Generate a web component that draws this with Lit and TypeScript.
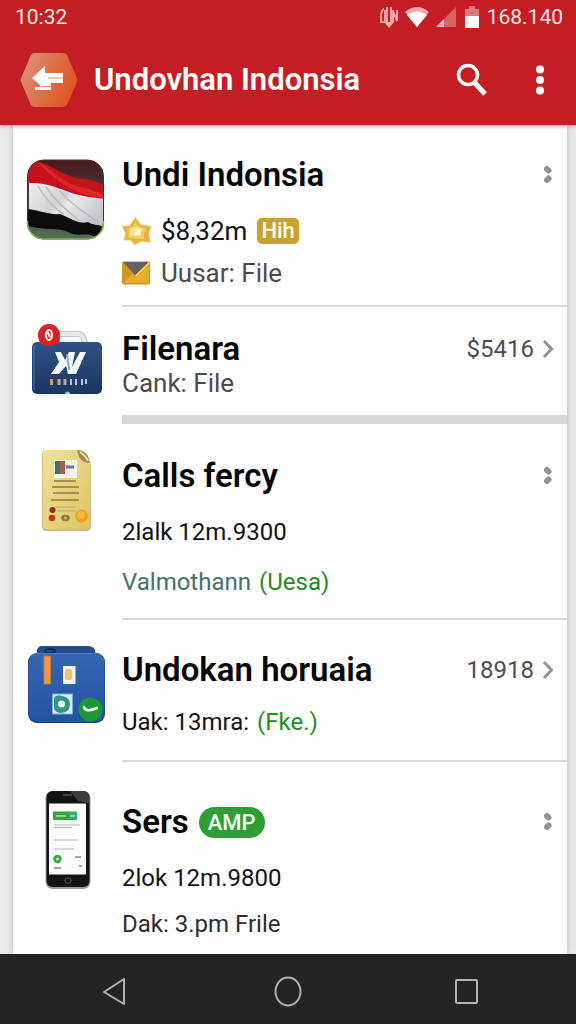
import { LitElement, html, css, svg, nothing } from "lit";
import { customElement, property } from "lit/decorators.js";

const flagIcon = html`<svg class="icon" width="80" height="82" viewBox="0 0 80 82" aria-hidden="true">
  <defs>
    <clipPath id="flagClip"><rect x="1.500" y="1" width="76" height="79" rx="16" /></clipPath>
    <linearGradient id="cloth" x1="0" y1="0" x2="1" y2="0.600">
      <stop offset="0" stop-color="#f2f2f3" /><stop offset=".45" stop-color="#d0d1d4" />
      <stop offset=".6" stop-color="#e8e9eb" /><stop offset="1" stop-color="#c3c5c9" />
    </linearGradient>
    <linearGradient id="ground" x1="0" y1="0" x2="0" y2="1">
      <stop offset="0" stop-color="#4b171b" /><stop offset=".7" stop-color="#47504b" /><stop offset="1" stop-color="#5b7259" />
    </linearGradient>
  </defs>
  <g clip-path="url(#flagClip)">
    <rect width="80" height="82" fill="url(#ground)" />
    <path d="M2 2 H12 C28 8 44 20 58 20 C66 20 72 24 80 26 V42 C64 40 58 38 46 34 C32 28 18 24 2 24Z" fill="#c4141b" />
    <path d="M12 3 C28 12 40 26 54 28 C64 29 70 34 80 35 V39 C60 38 36 30 12 3Z" fill="#de2626" />
    <path d="M3 24 C20 23 32 29 46 34 C58 38 66 38 80 40 V69 C68 63 60 66 48 62 C32 56 20 54 3 51Z" fill="url(#cloth)" />
    <path d="M20 28 C28 40 38 50 54 62 M12 27 C18 38 26 47 38 56 M34 32 C44 44 58 54 74 64" stroke="#b9bbbf" stroke-width="1.500" fill="none" />
    <path d="M2 50 C16 52 24 56 34 55 C46 60 54 66 62 63 C70 68 74 65 80 69 V75 L70 79 C62 72 52 79 42 73 C32 68 20 72 2 67Z" fill="#0c0c0e" />
  </g>
  <rect x="1.500" y="1" width="76" height="79" rx="16" fill="none" stroke="#3a3436" stroke-width="1" />
  <path d="M1.500 62 V64 A16 16 0 0 0 17.500 80 H61.500 A16 16 0 0 0 77.500 64 V62" fill="none" stroke="#79bd45" stroke-width="1.500" />
</svg>`;

const caseIcon = html`<svg class="icon" width="80" height="74" viewBox="0 0 80 74" aria-hidden="true">
  <defs><linearGradient id="caseBody" x1="0" y1="0" x2="0" y2="1">
    <stop offset="0" stop-color="#2f5387" /><stop offset="1" stop-color="#1c3562" /></linearGradient></defs>
  <path d="M31 21 V14 Q31 11 36 11 H52 Q58 11 59 21" fill="none" stroke="#c4c6c7" stroke-width="6" />
  <path d="M31 21 V14 Q31 11 36 11 H52 Q58 11 59 21" fill="none" stroke="#e9eaea" stroke-width="4" />
  <rect x="6" y="19" width="70" height="52" rx="5" fill="url(#caseBody)" />
  <path d="M8 22 V67" stroke="#5474a0" stroke-width="1" />
  <path d="M29 29 H35 L39 37 L43 29 H49 L46 44 L54 29 H60 L50 51 H42 L40 43 L33 51 H25 L33 39Z" fill="#f6f9fc" />
  <path d="M41 31 L43 47" stroke="#8da6c8" stroke-width="2" />
  <g stroke-width="3" fill="none"><path d="M25.500 56 v6" stroke="#d7a35e" /><path d="M33 56 v6 M39 56 v6" stroke="#b9a998" /><path d="M45 56 v6 M50 56 v6 M56 56 v6 M60 56 v5" stroke="#b9c7d9" stroke-width="2" /></g>
  <path d="M39 71 a2.500 2.500 0 0 1 5 0Z" fill="#b6c6dd" />
  <path d="M12.500 14 a10.500 11 0 0 1 21 -3 V21 H14Z" fill="#dc2227" />
  <circle cx="23" cy="12" r="11" fill="#dc2227" />
  <ellipse cx="23" cy="12" rx="3" ry="5" fill="none" stroke="#fff" stroke-width="2" /><path d="M21 8 L24 14" stroke="#fff" stroke-width="2" />
</svg>`;

const noteIcon = html`<svg class="icon" width="80" height="84" viewBox="0 0 80 84" aria-hidden="true">
  <defs><linearGradient id="paper" x1="0" y1="0" x2="1" y2="1">
    <stop offset="0" stop-color="#f1e29a" /><stop offset="1" stop-color="#dec363" /></linearGradient></defs>
  <path d="M20 2 H52 L65 15 V77 Q65 82 60 82 H21 Q16 82 16 77 V6 Q16 2 20 2Z" fill="#cbbd8a" />
  <path d="M20 1 H52 L64 14 V76 Q64 80 60 80 H21 Q17 80 17 76 V5 Q17 1 20 1Z" fill="url(#paper)" />
  <path d="M51 1 Q62 1 64 14 Q53 14 51 1Z" fill="#a08b4c" /><path d="M54 3 Q60 7 62 12" stroke="#efe09d" stroke-width="2" fill="none" />
  <rect x="28" y="11" width="23" height="18" fill="#f4f4ee" />
  <rect x="29" y="12" width="10" height="13" fill="#38775a" /><path d="M34 12 H39 V25 H34Z" fill="#ad5a4f" />
  <path d="M40 18 H48" stroke="#5876b4" stroke-width="3" /><path d="M39 17 H45" stroke="#c78585" stroke-width="1" />
  <path d="M28 32 H50 M26 38 H53 M27 44 H53 M25 51 H53" stroke="#8b7b42" stroke-width="1.300" />
  <path d="M30 58 H50 M31 62 H50" stroke="#c0ac62" stroke-width="1.200" />
  <circle cx="26.500" cy="61" r="3" fill="#8d2c22" /><circle cx="26" cy="69" r="3.300" fill="#bd3b22" />
  <ellipse cx="39.500" cy="69" rx="4.300" ry="3.200" fill="#927a40" /><circle cx="39.500" cy="69" r="1.500" fill="#c9b573" />
  <circle cx="55.500" cy="67" r="6.500" fill="#eda31e" /><circle cx="55" cy="66" r="4" fill="#f9b838" />
</svg>`;

const folderIcon = html`<svg class="icon" width="80" height="80" viewBox="0 0 80 80" aria-hidden="true">
  <defs><linearGradient id="folder" x1="0" y1="0" x2="0" y2="1">
    <stop offset="0" stop-color="#3567b3" /><stop offset="1" stop-color="#2453a0" /></linearGradient></defs>
  <path d="M10 14 L11 5 Q12 1 16 1 H62 Q67 1 69 5 L70 14Z" fill="#244c8f" />
  <ellipse cx="24" cy="6" rx="5" ry="2" fill="none" stroke="#122c5b" stroke-width="2" />
  <rect x="2" y="8" width="77" height="70" rx="9" fill="#183d7f" />
  <rect x="2.500" y="8" width="76" height="69" rx="9" fill="url(#folder)" />
  <path d="M10 8.500 H70" stroke="#5580c0" stroke-width="1" />
  <rect x="18" y="11" width="6.500" height="28" fill="#f0984a" stroke="#ca7933" />
  <rect x="37" y="21" width="12.500" height="18" fill="#f6f3ee" /><rect x="39" y="24" width="7" height="11" rx="2" fill="#f6bf6e" />
  <rect x="26.500" y="49" width="20" height="20" fill="#dceaf1" stroke="#7fa8dc" />
  <path d="M28 54 Q28 50 34 50.500 Q45 52 44 60 Q43 68 34 68 Q28 67 28 62Z" fill="#2a9a82" /><circle cx="35.500" cy="59" r="3.500" fill="#eef8f5" />
  <circle cx="64.500" cy="64.500" r="12" fill="#199a35" />
  <path d="M58 62 Q60 68 71 63" stroke="#fff" stroke-width="2.500" fill="none" stroke-linecap="round" />
</svg>`;

const phoneIcon = html`<svg class="icon" width="80" height="100" viewBox="0 0 80 100" aria-hidden="true">
  <rect x="19.500" y="1" width="45" height="98" rx="7" fill="#9c9da0" />
  <rect x="20.500" y="1" width="43" height="96" rx="6" fill="#141416" />
  <path d="M44 1 H57 Q63 1 63 8 V13 L52 11Z" fill="#3d3e41" />
  <path d="M37 5 H46" stroke="#606266" stroke-width="1.200" />
  <rect x="23" y="13.500" width="37" height="71" fill="#fbfcfc" />
  <rect x="27" y="21.500" width="24" height="8.500" fill="#34a63b" /><rect x="43" y="22" width="8" height="7" fill="#2fae76" />
  <path d="M30 26 H40 M44 26 H49" stroke="#b3e0b4" stroke-width="1.500" />
  <path d="M28 35 H54 M28 37.500 H46 M28 50 H51 M28 59 H48" stroke="#b4b6b8" stroke-width="1.200" />
  <circle cx="31.500" cy="69" r="4.200" fill="#35ab46" /><circle cx="31.500" cy="69" r="1.600" fill="#b2e1b9" />
  <path d="M49 67 H55 M28 78 H35 M53 76 H56" stroke="#828487" stroke-width="1.300" />
  <rect x="39" y="88" width="6" height="5" rx="2" fill="none" stroke="#53555a" />
</svg>`;

const starIcon = html`<svg width="30" height="30" viewBox="0 0 30 30" aria-hidden="true">
  <path d="M13.500 1.500 L18.500 9 L29 10.500 L26.500 17 L28 26 L19.500 25 L12.500 28.500 L8.500 24 L2.500 24 L3.500 17 L0.500 10.500 L8 10Z" fill="#e9b23c" stroke="#efc35c" stroke-width="1" stroke-linejoin="round" />
  <path d="M13.500 5 L17.500 11 L25 12 L22 18 L22 23 L13 23 L6 21 L7 16 L4 12 L10 12Z" fill="#f4cc5f" />
  <path d="M8 12 Q14 9 20 13 L18 20 L8 19Z" fill="#fbe393" /><path d="M14 14 L19 13 L18 19 L13 20Z" fill="#fffbe5" />
</svg>`;

const mailIcon = html`<svg width="30" height="26" viewBox="0 0 30 26" aria-hidden="true">
  <rect x="0" y="1.500" width="28" height="23" rx="2" fill="#d0941f" />
  <path d="M2 23 L10 14 L13 17 L27 4 V23Z" fill="#e9ae2c" />
  <path d="M1 2 H27 L13.500 15.500Z" fill="#66655c" /><path d="M13.500 16 L27 3" stroke="#f8dc87" stroke-width="1.500" />
</svg>`;

const moreMark = svg`<path d="M5 5 L6.500 6.500 M6.500 14.500 L5 16" stroke="#929292" stroke-width="6" stroke-linecap="round" />`;

interface Line { text: string; accent?: string; tone: string; space: string; icon?: unknown; badge?: string }
interface Entry { kind: string; icon: unknown; title: string; pill?: string; count?: string; lines: Line[] }

const entries: Entry[] = [
  { kind: "first", icon: flagIcon, title: "Undi Indonsia", lines: [
    { text: "$8,32m", tone: "dark", space: "far", icon: starIcon, badge: "Hih" },
    { text: "Uusar: File", tone: "grey", space: "near", icon: mailIcon } ] },
  { kind: "short", icon: caseIcon, title: "Filenara", count: "$5416", lines: [
    { text: "Cank: File", tone: "grey", space: "none" } ] },
  { kind: "tall", icon: noteIcon, title: "Calls fercy", lines: [
    { text: "2lalk 12m.9300", tone: "dark", space: "far" },
    { text: "Valmothann", accent: "(Uesa)", tone: "teal", space: "mid" } ] },
  { kind: "medium", icon: folderIcon, title: "Undokan horuaia", count: "18918", lines: [
    { text: "Uak: 13mra:", accent: "(Fke.)", tone: "dark", space: "mid" } ] },
  { kind: "last", icon: phoneIcon, title: "Sers", pill: "AMP", lines: [
    { text: "2lok 12m.9800", tone: "dark", space: "far" },
    { text: "Dak: 3.pm Frile", tone: "soft", space: "low" } ] },
];

@customElement("list-entry")
class ListEntry extends LitElement {
  @property({ attribute: false }) entry!: Entry;

  static styles = css`
    :host { display: block; }
    .row { display: grid; grid-template-columns: 96px minmax(0, 1fr); padding-left: 13px; }
    .icon { display: block; }
    .body { display: grid; grid-template-columns: minmax(0, 1fr) auto; border-bottom: 2px solid #d6d7d8; white-space: nowrap; }
    .first .body { padding: 32px 0 16px; }
    .short .body { padding: 24px 0 16px; border-bottom-width: 9px; }
    .tall .body { padding: 34px 0 20px; }
    .medium .body { padding: 32px 0 22px; }
    .last .body { padding: 42px 0 14px; border-bottom: 0; }
    .first .pic { padding-top: 34px; }
    .short .pic { padding-top: 16px; }
    .tall .pic, .medium .pic { padding-top: 25px; }
    .last .pic { padding-top: 28px; }
    .heading { display: flex; align-items: center; gap: 10px; }
    h2 { margin: 0; font-size: 33px; line-height: 36px; font-weight: 600; color: #060606; }
    .pill { height: 31px; padding: 0 9px; border-radius: 16px; background: #2f9e35; color: #f4fff2; font-size: 22px; line-height: 31px; font-weight: 500; }
    .line { display: flex; align-items: center; height: 32px; font-size: 24px; line-height: 32px; grid-column: 1 / -1; }
    .first .line, .short .line { font-size: 26px; }
    .line svg { flex: none; margin-right: 9px; }
    .far { margin-top: 22px; }
    .mid { margin-top: 18px; }
    .low { margin-top: 14px; }
    .near { margin-top: 10px; }
    .none { margin-top: 0; }
    .dark { color: #131313; }
    .soft { color: #2d2d2d; }
    .grey { color: #4c4c4c; }
    .teal { color: #43716b; }
    .accent { color: #258d20; margin-left: 8px; }
    .badge { margin-left: 10px; padding: 0 4px; height: 26px; border-radius: 5px; background: #c9a22c; color: #fffbe8; font-size: 22px; line-height: 26px; font-weight: 500; }
    .more, .open { display: flex; align-items: center; gap: 8px; height: 36px; border: 0; padding: 0 13px 0 0; background: none; font: inherit; font-size: 24px; line-height: 36px; color: #4e4e4e; }
  `;

  render() {
    const e = this.entry;
    return html`<article class="row ${e.kind}">
      <div class="pic">${e.icon}</div>
      <div class="body">
        <div class="heading"><h2>${e.title}</h2>${e.pill ? html`<span class="pill">${e.pill}</span>` : nothing}</div>
        ${e.count
          ? html`<button class="open" aria-label="${e.title} ${e.count}">${e.count}
              <svg width="12" height="20" viewBox="0 0 12 20"><path d="M2 2 L9.500 10 L2 18" fill="none" stroke="#929292" stroke-width="3" /></svg></button>`
          : html`<button class="more" aria-label="Options for ${e.title}"><svg width="12" height="22" viewBox="0 0 12 22">${moreMark}</svg></button>`}
        ${e.lines.map((l) => html`<div class="line ${l.tone} ${l.space}">${l.icon ?? nothing}<span>${l.text}</span>${l.accent ? html`<span class="accent">${l.accent}</span>` : nothing}${l.badge ? html`<span class="badge">${l.badge}</span>` : nothing}</div>`)}
      </div>
    </article>`;
  }
}

@customElement("app-root")
class AppRoot extends LitElement {
  static styles = css`
    :host { display: flex; flex-direction: column; min-height: 100vh; font-family: Roboto, "Liberation Sans", sans-serif; background: #e9eaea; }
    button { border: 0; padding: 0; background: none; font: inherit; color: inherit; display: block; }
    svg { display: block; }
    .top { background: #c41e24; color: #fff; box-shadow: 0 1px 4px #77777799; z-index: 1; }
    .status { display: flex; align-items: center; gap: 5px; height: 34px; padding: 0 13px 0 15px; font-size: 21px; line-height: 34px; color: #fde9e8; }
    .time { flex: 1; }
    .bar { display: flex; align-items: center; height: 91px; padding: 0 29px 0 20px; }
    h1 { flex: 1; margin: 0 0 0 16px; font-size: 31px; line-height: 40px; font-weight: 600; white-space: nowrap; }
    .find { margin-right: 45px; }
    main { flex: 1; margin: 0 9px 0 13px; background: #fefefe; box-shadow: 0 0 6px #8888; }
    .keys { display: flex; justify-content: space-around; align-items: center; height: 71px; padding: 0 24px; background: #222425; z-index: 1; }
    .keys button { height: 32px; margin-top: 4px; }
  `;

  render() {
    return html`
      <header class="top">
        <div class="status">
          <span class="time">10:32</span>
          <svg width="20" height="24" viewBox="0 0 20 24" aria-hidden="true">
            <g fill="none" stroke="#f0a3a2" stroke-width="2"><path d="M5 4 Q2 5 2 12 V17 H6 V5 M8 2 V20 M12 2 V20 M14 5 V17 M14 6 L18 16 V5" /></g>
            <path d="M5 17 H15 L10 23Z" fill="#f3b2b0" />
          </svg>
          <svg width="26" height="22" viewBox="0 0 26 22" aria-hidden="true">
            <path d="M1 6 Q13 -4 25 6 L13 21Z" fill="#f0aaa9" /><path d="M3 9 Q13 2 23 9 L13 21Z" fill="#fff" />
          </svg>
          <svg width="22" height="22" viewBox="0 0 22 22" aria-hidden="true">
            <path d="M21 1 V21 H1Z" fill="#d76365" /><path d="M9 13 V21 H1Z" fill="#f9bdbb" />
          </svg>
          <svg width="20" height="22" viewBox="0 0 20 22" aria-hidden="true">
            <path d="M7 0 H13 V3 H17 V11 H3 V3 H7Z" fill="#dc797a" /><path d="M3 10 H17 V22 H3Z" fill="#fff" />
          </svg>
          <span>168.140</span>
        </div>
        <div class="bar">
          <button aria-label="Back">
            <svg width="58" height="56" viewBox="0 0 58 56">
              <defs><linearGradient id="hex" x1="0" y1="0.200" x2="1" y2="0.600">
                <stop offset="0" stop-color="#de8f7e" /><stop offset=".5" stop-color="#dc7148" /><stop offset="1" stop-color="#df5420" />
              </linearGradient></defs>
              <path d="M15 1 H43 Q46 1 47 3 L57 26 Q58 28 57 30 L47 53 Q46 55 43 55 H15 Q12 55 11 53 L1 30 Q0 28 1 26 L11 3 Q12 1 15 1Z" fill="url(#hex)" />
              <path d="M12 26 L25 14 V21 H43 V31 H31 V38 H15 V35 H20 V33Z" fill="#fff" />
              <path d="M28 26 H43 M21 34.500 H31" stroke="#e28d62" stroke-width="1" />
            </svg>
          </button>
          <h1>Undovhan Indonsia</h1>
          <button class="find" aria-label="Search">
            <svg width="32" height="34" viewBox="0 0 32 34">
              <circle cx="12" cy="12" r="9.500" fill="none" stroke="#fff" stroke-width="3.500" />
              <path d="M18.500 19.500 L29 31" stroke="#fff" stroke-width="5" />
            </svg>
          </button>
          <button aria-label="More options">
            <svg width="14" height="30" viewBox="0 0 14 30"><g fill="#fff"><circle cx="7" cy="4.500" r="4" /><circle cx="7" cy="15" r="4" /><circle cx="7" cy="25.500" r="4" /></g></svg>
          </button>
        </div>
      </header>
      <main>${entries.map((e) => html`<list-entry .entry=${e}></list-entry>`)}</main>
      <nav class="keys" aria-label="System">
        <button aria-label="Back"><svg width="28" height="32" viewBox="0 0 28 32"><path d="M6 16 L26 3 V28Z" fill="none" stroke="#b2b3b3" stroke-width="2" stroke-linejoin="round" /></svg></button>
        <button aria-label="Home"><svg width="28" height="32" viewBox="0 0 28 32"><ellipse cx="14" cy="15.500" rx="12.500" ry="14" fill="none" stroke="#b2b3b3" stroke-width="2" /></svg></button>
        <button aria-label="Recent apps"><svg width="28" height="32" viewBox="0 0 28 32"><rect x="6" y="4" width="21" height="23" rx="1" fill="none" stroke="#b2b3b3" stroke-width="2" /></svg></button>
      </nav>`;
  }
}
